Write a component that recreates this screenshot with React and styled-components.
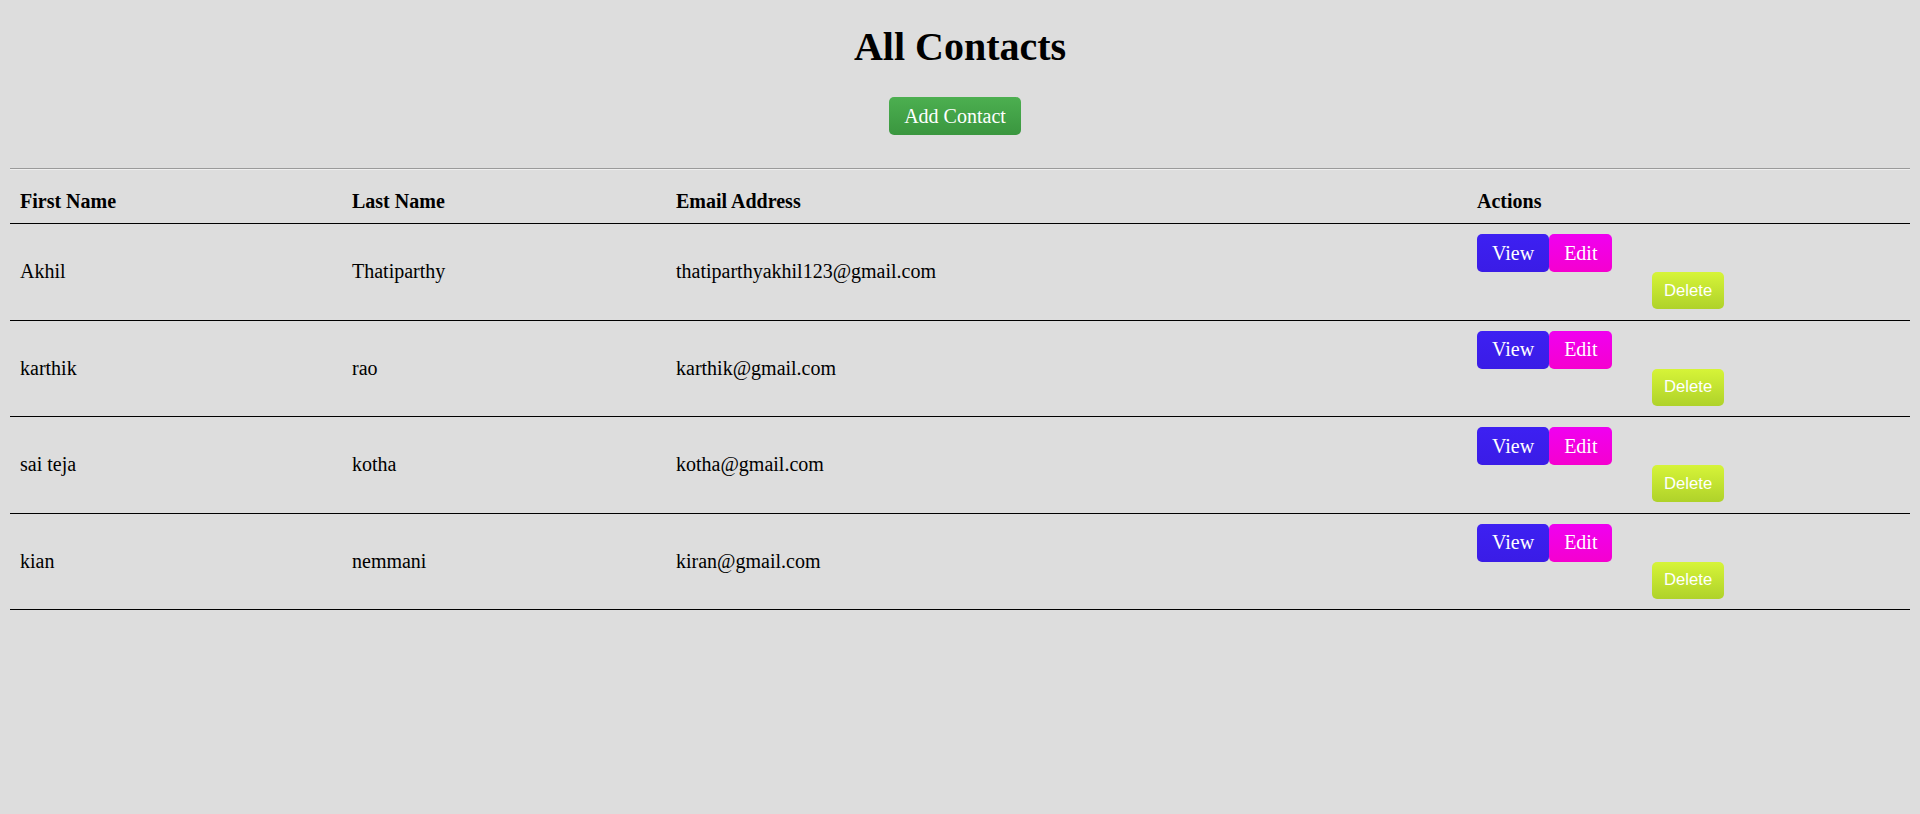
import React from "react";
import styled, { createGlobalStyle } from "styled-components";

const GlobalStyle = createGlobalStyle`
  html, body {
    margin: 0;
    padding: 0;
    background: #dddddd;
  }
  body {
    font-family: "Liberation Serif", "Times New Roman", serif;
    color: #000;
  }
`;

const Page = styled.div`
  padding: 0 10px;
  min-height: 814px;
  box-sizing: border-box;
`;

const Title = styled.h1`
  margin: 24px 0 0;
  font-size: 40px;
  line-height: 46px;
  font-weight: bold;
  text-align: center;
`;

const TopBar = styled.div`
  display: flex;
  justify-content: center;
  margin-top: 27px;
  padding-right: 10px;
`;

const AddButton = styled.button`
  height: 38px;
  padding: 0 15px;
  border: none;
  border-radius: 5px;
  background: linear-gradient(#4caf50, #3a963f);
  color: #fff;
  font-family: "Liberation Serif", "Times New Roman", serif;
  font-size: 20px;
  cursor: pointer;
`;

const Divider = styled.hr`
  margin: 33px 0 0;
  height: 0;
  border: none;
  border-top: 1px solid #9a9a9a;
  border-bottom: 1px solid #efefef;
`;

const Table = styled.table`
  width: 100%;
  border-collapse: collapse;
  table-layout: fixed;
`;

const HeadCell = styled.th`
  box-sizing: border-box;
  width: ${(p) => p.$w}px;
  text-align: left;
  font-size: 20px;
  line-height: 23px;
  font-weight: bold;
  padding: 20px 10px 10px;
  border-bottom: 1px solid #000;
`;

const Row = styled.tr`
  border-bottom: 1px solid #000;
`;

const Cell = styled.td`
  font-size: 20px;
  line-height: 23px;
  padding: 10px 10px 10.5px;
  vertical-align: middle;
`;

const ActionTop = styled.div`
  display: flex;
`;

const ActionBottom = styled.div`
  display: flex;
  padding-left: 175px;
`;

const ActionButton = styled.button`
  height: 38px;
  padding: 0 15px;
  border: none;
  border-radius: 5px;
  color: #fff;
  font-family: "Liberation Serif", "Times New Roman", serif;
  font-size: 20px;
  background: ${(p) => p.$bg};
  cursor: pointer;
`;

const DeleteButton = styled.button`
  height: 37px;
  padding: 0 12px;
  border: none;
  border-radius: 5px;
  color: #fff;
  font-family: "Liberation Sans", Arial, sans-serif;
  font-size: 16.67px;
  background: linear-gradient(#d6f438, #afd22a);
  cursor: pointer;
`;

const contacts = [
  { first: "Akhil", last: "Thatiparthy", email: "thatiparthyakhil123@gmail.com" },
  { first: "karthik", last: "rao", email: "karthik@gmail.com" },
  { first: "sai teja", last: "kotha", email: "kotha@gmail.com" },
  { first: "kian", last: "nemmani", email: "kiran@gmail.com" },
];

export default function App() {
  return (
    <>
      <GlobalStyle />
      <Page>
        <Title>All Contacts</Title>
        <TopBar>
          <AddButton>Add Contact</AddButton>
        </TopBar>
        <Divider />
        <Table>
          <thead>
            <tr>
              <HeadCell $w={332}>First Name</HeadCell>
              <HeadCell $w={324}>Last Name</HeadCell>
              <HeadCell $w={801}>Email Address</HeadCell>
              <HeadCell $w={443}>Actions</HeadCell>
            </tr>
          </thead>
          <tbody>
            {contacts.map((c) => (
              <Row key={c.email}>
                <Cell>{c.first}</Cell>
                <Cell>{c.last}</Cell>
                <Cell>{c.email}</Cell>
                <Cell>
                  <ActionTop>
                    <ActionButton $bg="linear-gradient(#3d20f2, #3a1ce6)">View</ActionButton>
                    <ActionButton $bg="linear-gradient(#f000f0, #f500cf)">Edit</ActionButton>
                  </ActionTop>
                  <ActionBottom>
                    <DeleteButton>Delete</DeleteButton>
                  </ActionBottom>
                </Cell>
              </Row>
            ))}
          </tbody>
        </Table>
      </Page>
    </>
  );
}
